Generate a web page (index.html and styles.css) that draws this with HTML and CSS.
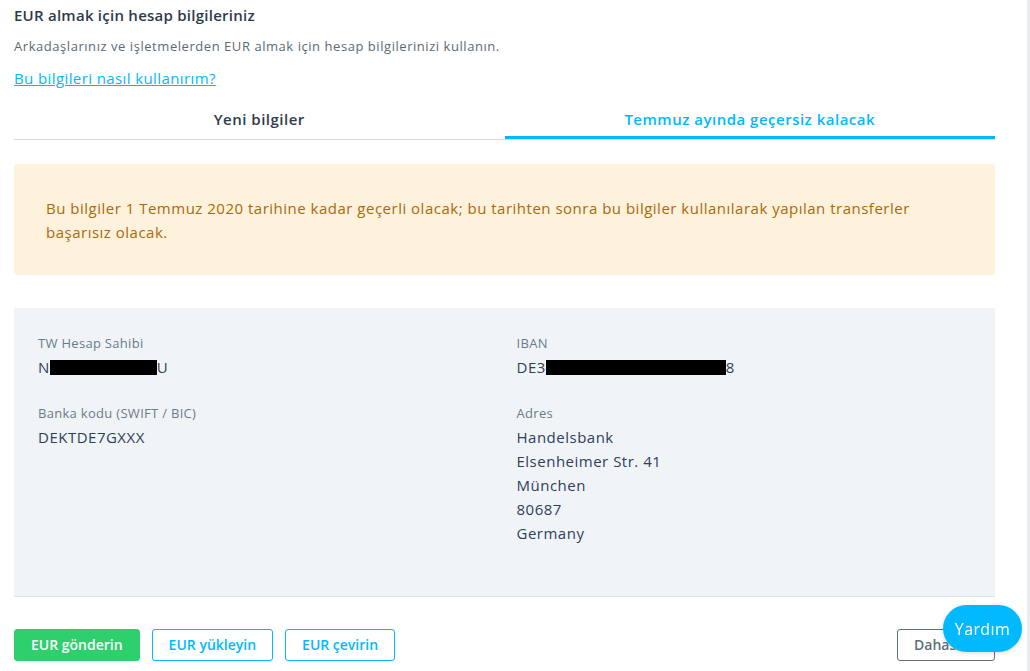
FILE: index.html
```html
<!DOCTYPE html>
<html lang="tr">
<head>
    <meta charset="UTF-8">
    <meta name="viewport" content="width=device-width, initial-scale=1.0">
    <title>EUR hesap bilgileri</title>
    <link rel="stylesheet" href="styles.css">
</head>
<body>

<div class="page">
    <main class="content">
        <h1 class="title">EUR almak için hesap bilgileriniz</h1>
        <p class="lead">Arkadaşlarınız ve işletmelerden EUR almak için hesap bilgilerinizi kullanın.</p>
        <p class="help"><a class="help-link" href="#">Bu bilgileri nasıl kullanırım?</a></p>

        <!-- sekmeler -->
        <div class="tabs">
            <button class="tab">Yeni bilgiler</button>
            <button class="tab active">Temmuz ayında geçersiz kalacak</button>
        </div>

        <div class="notice">
            <p>Bu bilgiler 1 Temmuz 2020 tarihine kadar geçerli olacak; bu tarihten sonra bu bilgiler kullanılarak yapılan transferler başarısız olacak.</p>
        </div>

        <!-- hesap bilgileri -->
        <section class="details">
            <div class="col">
                <div class="field">
                    <div class="label">TW Hesap Sahibi</div>
                    <div class="value">N<span class="redact redact-name"></span>U</div>
                </div>
                <div class="field">
                    <div class="label">Banka kodu (SWIFT / BIC)</div>
                    <div class="value">DEKTDE7GXXX</div>
                </div>
            </div>
            <div class="col">
                <div class="field">
                    <div class="label">IBAN</div>
                    <div class="value">DE3<span class="redact redact-iban"></span>8</div>
                </div>
                <div class="field">
                    <div class="label">Adres</div>
                    <div class="value">Handelsbank<br>Elsenheimer Str. 41<br>München<br>80687<br>Germany</div>
                </div>
            </div>
        </section>

        <div class="actions">
            <button class="btn btn-primary">EUR gönderin</button>
            <button class="btn btn-outline">EUR yükleyin</button>
            <button class="btn btn-outline">EUR çevirin</button>
            <button class="btn btn-more">Dahası</button>
        </div>
    </main>
    <div class="scroll-track"></div>
</div>

<button class="help-fab">Yardım</button>

</body>
</html>
```

FILE: styles.css
```css
* {
    box-sizing: border-box;
}
body {
    margin: 0;
    font-family: "Open Sans", "Liberation Sans", sans-serif;
    line-height: 20px;
    color: #2e3a4c;
    background-color: #fff;
}
.page {
    display: flex;
    min-height: 671px;
}
.content {
    flex: 1;
    padding: 5px 32px 0 14px;
}
.scroll-track {
    width: 3px;
    background-color: #e9edf0;
}

.title {
    margin: 0;
    font-size: 15px;
    line-height: 20px;
    font-weight: 600;
    letter-spacing: 0.25px;
    color: #2e3a4c;
}
.lead {
    margin: 11px 0 0;
    font-size: 13px;
    line-height: 20px;
    letter-spacing: 0.55px;
    color: #5d6a75;
}
.help {
    margin: 12px 0 0;
    line-height: 20px;
}
.help-link {
    font-size: 15px;
    letter-spacing: 0.4px;
    color: #00b9ff;
    text-decoration: underline;
}

.tabs {
    display: flex;
    margin-top: 12px;
    border-bottom: 1px solid #d6d9dc;
}
.tab {
    flex: 1;
    padding: 9px 0 7px;
    font: inherit;
    font-size: 15px;
    line-height: 20px;
    font-weight: 600;
    letter-spacing: 0.5px;
    color: #2e3a4c;
    background: none;
    border: none;
    border-bottom: 3px solid transparent;
    cursor: pointer;
}
.tab.active {
    color: #00b9ff;
    border-bottom-color: #00b9ff;
}

.notice {
    margin-top: 24px;
    padding: 32px 32px 31px;
    background-color: #fff2dc;
    border-radius: 3px;
}
.notice p {
    margin: 0;
    font-size: 15px;
    line-height: 24px;
    letter-spacing: 0.5px;
    color: #a86a0a;
}

.details {
    display: grid;
    grid-template-columns: 1fr 1fr;
    column-gap: 24px;
    margin-top: 33px;
    padding: 25px 24px 24px;
    min-height: 289px;
    background-color: #f1f4f7;
    border-bottom: 1px solid #dde2e7;
}
.field {
    margin-bottom: 24px;
}
.label {
    font-size: 13px;
    line-height: 20px;
    letter-spacing: 0.3px;
    color: #6b7b8b;
}
.value {
    margin-top: 2px;
    font-size: 15px;
    line-height: 24px;
    letter-spacing: 0.5px;
    color: #2e3e5c;
}
.redact {
    display: inline-block;
    height: 15px;
    vertical-align: -2px;
    background-color: #000;
}
.redact-name {
    width: 107px;
}
.redact-iban {
    width: 180px;
}

.actions {
    display: flex;
    gap: 12px;
    margin-top: 32px;
}
.btn {
    height: 32px;
    padding: 0 16px;
    font: inherit;
    font-size: 14px;
    font-weight: 600;
    border-radius: 3px;
    cursor: pointer;
}
.btn-primary {
    color: #fff;
    background-color: #2ed06e;
    border: 1px solid #2ed06e;
}
.btn-outline {
    color: #00b9ff;
    background-color: #fff;
    border: 1px solid #00b9ff;
}
.btn-more {
    margin-left: auto;
    width: 98px;
    text-align: left;
    color: #5d7079;
    background-color: #fff;
    border: 1px solid #5d7079;
}

.help-fab {
    position: fixed;
    right: 8px;
    bottom: 19px;
    width: 79px;
    height: 47px;
    padding: 0;
    font: inherit;
    font-size: 16px;
    letter-spacing: 0.4px;
    color: #fff;
    background-color: #00b9ff;
    border: none;
    border-radius: 24px;
    box-shadow: 0 1px 4px rgba(0, 0, 0, 0.15);
    cursor: pointer;
}
```
